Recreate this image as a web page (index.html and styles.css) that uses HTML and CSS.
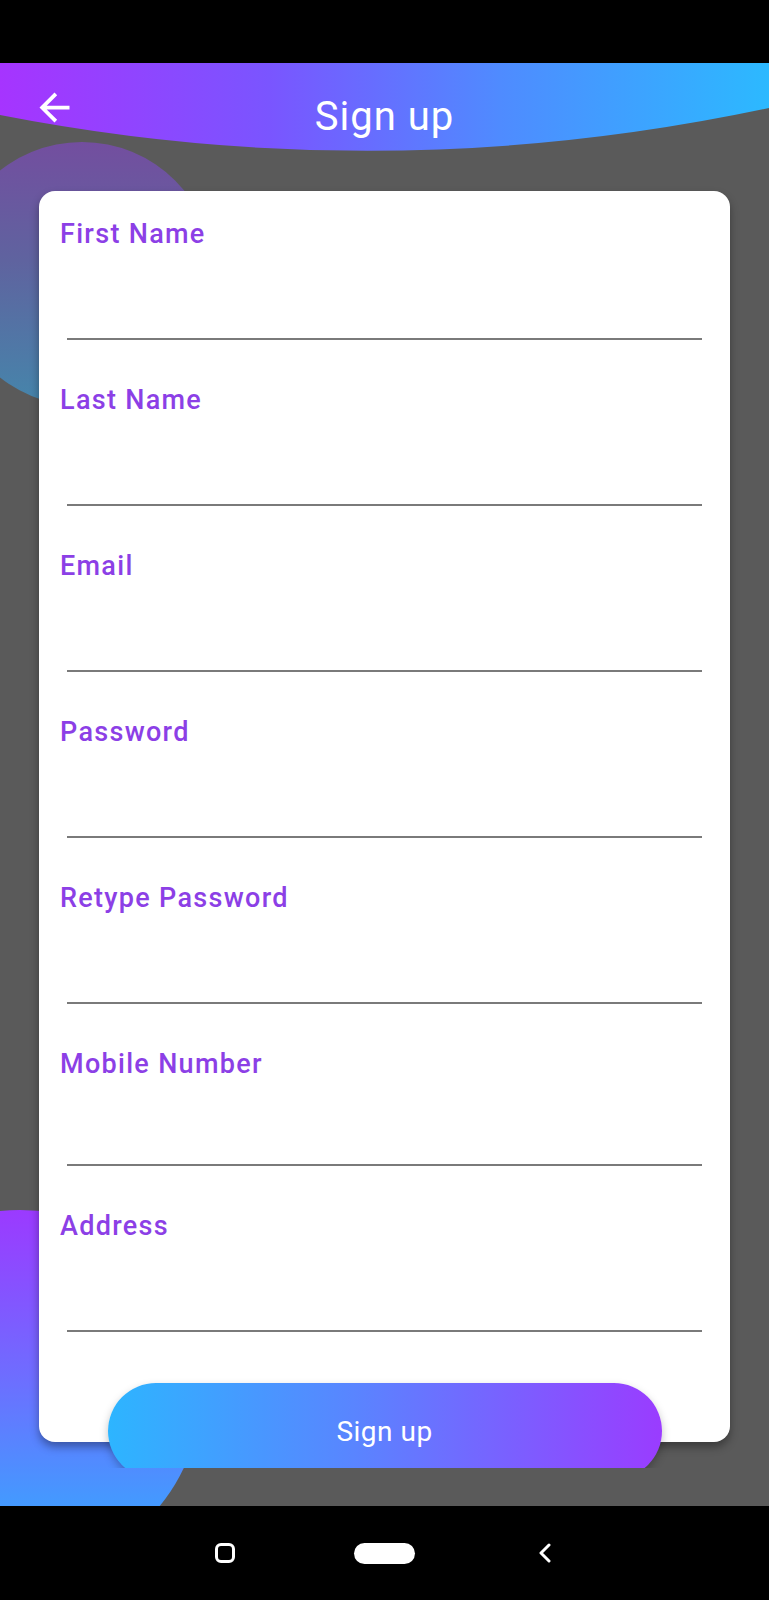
FILE: index.html
```html
<!DOCTYPE html>
<html lang="en">
<head>
<meta charset="utf-8">
<title>Sign up</title>
<link rel="stylesheet" href="styles.css">
</head>
<body>
<div class="phone">
  <div class="status-bar"></div>
  <div class="screen">
    <div class="blob blob-top"></div>
    <div class="blob blob-bottom"></div>
    <header class="appbar">
      <button class="back" aria-label="Back">
        <svg width="45" height="45" viewBox="0 0 24 24"><path fill="#fff" d="M20 11H7.83l5.59-5.59L12 4l-8 8 8 8 1.41-1.41L7.83 13H20v-2z"/></svg>
      </button>
      <h1 class="title">Sign up</h1>
      <span></span>
    </header>
    <main class="content">
      <form class="card">
        <div class="row"><label class="label">First Name</label><div class="field"></div></div>
        <div class="row"><label class="label">Last Name</label><div class="field"></div></div>
        <div class="row"><label class="label">Email</label><div class="field"></div></div>
        <div class="row"><label class="label">Password</label><div class="field"></div></div>
        <div class="row"><label class="label">Retype Password</label><div class="field"></div></div>
        <div class="row"><label class="label">Mobile Number</label><div class="field field-short"></div></div>
        <div class="row row-last"><label class="label">Address</label><div class="field"></div></div>
      </form>
      <div class="submit">Sign up</div>
    </main>
  </div>
  <nav class="navbar">
    <span class="nav-slot"><span class="nav-recent"></span></span>
    <span class="nav-slot"><span class="nav-home"></span></span>
    <span class="nav-slot">
      <svg width="14" height="20" viewBox="0 0 14 20"><polyline points="11,2 3,10 11,18" fill="none" stroke="#fff" stroke-width="3" stroke-linecap="round" stroke-linejoin="round"/></svg>
    </span>
  </nav>
</div>
</body>
</html>
```

FILE: styles.css
```css
* {
  box-sizing: border-box;
}

html, body {
  margin: 0;
  padding: 0;
  background: #000;
}

body {
  font-family: Roboto, "Liberation Sans", Arial, sans-serif;
}

.phone {
  width: 769px;
  height: 1600px;
  display: flex;
  flex-direction: column;
  background: #000;
}

.status-bar {
  height: 63px;
  background: #000;
  flex: none;
}

.screen {
  position: relative;
  height: 1443px;
  flex: none;
  background: #5a5a5a;
  overflow: hidden;
  display: flex;
  flex-direction: column;
}

.blob {
  position: absolute;
  border-radius: 50%;
}

.blob-top {
  left: -50px;
  top: 79px;
  width: 264px;
  height: 264px;
  background: linear-gradient(180deg, #734e9f 0%, #5f639f 45%, #4586ab 100%);
}

.blob-bottom {
  left: -161px;
  top: 1147px;
  width: 362px;
  height: 362px;
  background: linear-gradient(180deg, #9b3aff 0%, #6f6cff 45%, #4598ff 80%, #3aa6ff 100%);
}

.appbar {
  position: relative;
  z-index: 1;
  height: 88px;
  flex: none;
  display: grid;
  grid-template-columns: 1fr auto 1fr;
  align-items: start;
  padding-top: 22px;
  background: linear-gradient(90deg, #a634ff 0%, #7a55ff 35%, #4f8bff 65%, #2cb9ff 100%);
  clip-path: path("M0 0 H769 V45 Q384 127 0 52 Z");
}

.back {
  justify-self: start;
  margin-left: 32px;
  width: 45px;
  height: 45px;
  padding: 0;
  border: 0;
  background: none;
  display: block;
}

.back svg {
  display: block;
}

.title {
  margin: 9px 0 0;
  font-size: 40px;
  line-height: 46px;
  font-weight: 400;
  letter-spacing: 1px;
  color: #fff;
}

.content {
  position: relative;
  z-index: 1;
  height: 1317px;
  flex: none;
  overflow: hidden;
  padding-top: 40px;
}

.card {
  margin: 0 39px;
  background: #fff;
  border-radius: 16px;
  padding: 27px 0 110px;
  box-shadow: 0 5px 9px rgba(0, 0, 0, 0.35);
}

.row {
  display: flex;
  flex-direction: column;
  margin-bottom: 44px;
}

.row-last {
  margin-bottom: 0;
}

.label {
  padding-left: 21px;
  font-size: 27px;
  line-height: 32px;
  font-weight: 500;
  letter-spacing: 1.3px;
  color: #8c3fe6;
}

.field {
  margin: 0 28px;
  height: 90px;
  border-bottom: 2px solid #7a7a7a;
}

.field-short {
  height: 86px;
}

.submit {
  width: 554px;
  height: 96px;
  margin: -59px auto 0;
  border-radius: 48px;
  background: linear-gradient(90deg, #2db5ff 0%, #5a84ff 45%, #9a3cff 100%);
  color: #fff;
  font-size: 28px;
  letter-spacing: 0.5px;
  display: flex;
  align-items: center;
  justify-content: center;
  box-shadow: 0 4px 8px rgba(0, 0, 0, 0.25);
}

.navbar {
  flex: 1;
  display: flex;
  justify-content: center;
  align-items: center;
  background: #000;
}

.nav-slot {
  width: 160px;
  display: flex;
  justify-content: center;
  align-items: center;
}

.nav-recent {
  width: 20px;
  height: 20px;
  border: 3px solid #fff;
  border-radius: 6px;
}

.nav-home {
  width: 61px;
  height: 21px;
  border-radius: 11px;
  background: #fff;
}

.nav-slot svg {
  display: block;
}
```
